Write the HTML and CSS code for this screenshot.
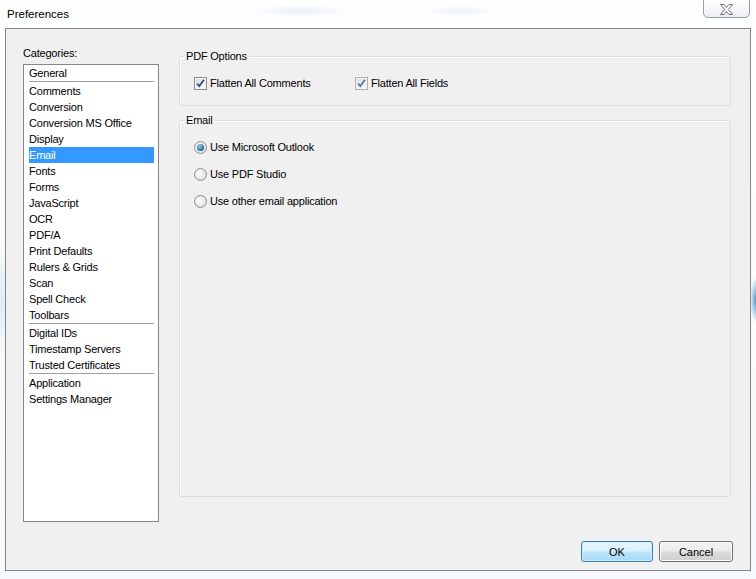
FILE: index.html
```html
<!DOCTYPE html>
<html>
	<head>
		<meta charset="utf-8">
		<title>Preferences</title>
		<link rel="stylesheet" href="styles.css">
	</head>
	<body>
		<div class="titlebar">
			<span class="title">Preferences</span>
			<div class="close-btn">
				<svg width="15" height="11" viewBox="0 0 15 11">
					<path d="M1.5 0.5 H5 L7.5 3.4 L10 0.5 H13.5 L9.3 5.5 L13.5 10.5 H10 L7.5 7.6 L5 10.5 H1.5 L5.7 5.5 Z" fill="#fff" stroke="#6a707a" stroke-width="1" stroke-linejoin="round"/>
				</svg>
			</div>
		</div>
		<div class="dialog">
			<div class="content">
				<div class="categories">
					<div class="cat-label">Categories:</div>
					<ul class="cat-list">
						<li>General</li>
						<li class="sep"></li>
						<li>Comments</li>
						<li>Conversion</li>
						<li>Conversion MS Office</li>
						<li>Display</li>
						<li class="active">Email</li>
						<li>Fonts</li>
						<li>Forms</li>
						<li>JavaScript</li>
						<li>OCR</li>
						<li>PDF/A</li>
						<li>Print Defaults</li>
						<li>Rulers &amp; Grids</li>
						<li>Scan</li>
						<li>Spell Check</li>
						<li>Toolbars</li>
						<li class="sep"></li>
						<li>Digital IDs</li>
						<li>Timestamp Servers</li>
						<li>Trusted Certificates</li>
						<li class="sep"></li>
						<li>Application</li>
						<li>Settings Manager</li>
					</ul>
				</div>
				<div class="options">
					<fieldset class="group group-pdf">
						<legend>PDF Options</legend>
						<div class="check-row">
							<label class="check-option">
								<span class="checkbox"><svg width="11" height="11" viewBox="0 0 11 11"><path d="M2 5.5 L4.3 8 L9 1.8" fill="none" stroke="#2a4d8f" stroke-width="1.8"/></svg></span>
								Flatten All Comments
							</label>
							<label class="check-option">
								<span class="checkbox light"><svg width="11" height="11" viewBox="0 0 11 11"><path d="M2 5.5 L4.3 8 L9 1.8" fill="none" stroke="#5a72a0" stroke-width="1.8"/></svg></span>
								Flatten All Fields
							</label>
						</div>
					</fieldset>
					<fieldset class="group group-email">
						<legend>Email</legend>
						<label class="radio-option"><span class="radio checked"></span>Use Microsoft Outlook</label>
						<label class="radio-option"><span class="radio"></span>Use PDF Studio</label>
						<label class="radio-option"><span class="radio"></span>Use other email application</label>
					</fieldset>
				</div>
			</div>
			<div class="footer">
				<button class="btn btn-default">OK</button>
				<button class="btn">Cancel</button>
			</div>
		</div>
	</body>
</html>
```

FILE: styles.css
```css
*{
	margin: 0;
	padding: 0;
	box-sizing: border-box;
	list-style: none;
}
html,body{
	width: 756px;
	height: 579px;
	overflow: hidden;
}
body{
	font-family: "Liberation Sans", Arial, sans-serif;
	font-size: 11px;
	letter-spacing: -0.2px;
	color: #000;
	background:
		radial-gradient(ellipse 6px 22px at 756px 300px, #4d95c9, rgba(77,149,201,0) 100%),
		radial-gradient(ellipse 50px 6px at 300px 11px, #e8f0f8, rgba(232,240,248,0) 100%),
		radial-gradient(ellipse 40px 5px at 460px 11px, #eaf2f9, rgba(234,242,249,0) 100%),
		radial-gradient(ellipse 8px 60px at 2px 300px, #dceaf4, rgba(220,234,244,0) 100%),
		linear-gradient(#fdfefe, #f6f9fb);
}
.titlebar{
	height: 28px;
	display: flex;
	align-items: flex-start;
}
.title{
	font-size: 11.5px;
	letter-spacing: 0;
	margin: 7px 0 0 7px;
	line-height: 14px;
}
.close-btn{
	margin-left: auto;
	margin-right: 6px;
	width: 47px;
	height: 19px;
	margin-top: -1px;
	border: 1px solid #9a9fa6;
	border-radius: 0 0 5px 5px;
	background: linear-gradient(#ffffff, #f6f7f9 50%, #eceef1);
	display: flex;
	align-items: center;
	justify-content: center;
	padding-top: 1px;
}
.dialog{
	margin: 0 5px;
	height: 543px;
	border: 1px solid #858585;
	background: #f0f0f0;
	display: flex;
	flex-direction: column;
}
.content{
	display: flex;
	padding: 16px 0 0 17px;
}
.categories{
	width: 136px;
}
.cat-label{
	line-height: 16px;
	margin-bottom: 3px;
}
.cat-list{
	height: 458px;
	border: 1px solid #828790;
	background: #fff;
}
.cat-list li{
	height: 16px;
	line-height: 16px;
	margin: 0 4px 0 5px;
	white-space: nowrap;
}
.cat-list li.sep{
	height: 2px;
	border-top: 1px solid #a0a0a0;
}
.cat-list li.active{
	background: #3399ff;
	color: #fff;
}
.options{
	margin-left: 20px;
	width: 552px;
	margin-top: 3px;
}
.group{
	border: 1px solid #d5dfe5;
	border-radius: 3px;
	box-shadow: inset 1px 1px 0 #fff;
	padding: 0 14px;
}
.group legend{
	line-height: 16px;
	padding: 0 2px;
	margin-left: -10px;
}
.group-pdf{
	padding-top: 11px;
	padding-bottom: 14px;
}
.check-row{
	display: flex;
}
.check-option{
	display: flex;
	align-items: center;
	height: 16px;
	width: 161px;
	gap: 3px;
}
.checkbox{
	width: 13px;
	height: 13px;
	border: 1px solid #8e8f8f;
	background: linear-gradient(135deg, #dcdcdc, #fdfdfd);
	box-shadow: inset 0 0 0 1px #f4f4f4;
	display: flex;
	align-items: center;
	justify-content: center;
}
.checkbox.light{
	border-color: #b1b1b1;
}
.group-email{
	margin-top: 6px;
	height: 385px;
	padding-top: 11px;
	display: flex;
	flex-direction: column;
	gap: 11px;
}
.radio-option{
	display: flex;
	align-items: center;
	height: 16px;
	gap: 3px;
}
.radio{
	width: 13px;
	height: 13px;
	border-radius: 50%;
	border: 1px solid #8e8f8f;
	background: radial-gradient(circle at 40% 40%, #ffffff, #dcdcdc 80%);
	display: flex;
	align-items: center;
	justify-content: center;
}
.radio.checked::after{
	content: "";
	width: 7px;
	height: 7px;
	border-radius: 50%;
	background: radial-gradient(circle at 40% 35%, #8fd1f5, #1c5b8f 75%);
}
.footer{
	margin-top: auto;
	display: flex;
	justify-content: flex-end;
	gap: 6px;
	padding: 0 17px 8px 0;
}
.btn{
	font-family: "Liberation Sans", Arial, sans-serif;
	font-size: 11px;
	color: #000;
	width: 74px;
	height: 21px;
	border: 1px solid #707070;
	border-radius: 3px;
	background: linear-gradient(#f2f2f2, #ebebeb 49%, #dddddd 51%, #cfcfcf);
	box-shadow: inset 0 0 0 1px #fcfcfc;
}
.btn-default{
	width: 72px;
	border-color: #3c7fb1;
	background: linear-gradient(#eaf6fd, #d9f0fc 49%, #bee6fd 51%, #a7d9f5);
	box-shadow: inset 0 0 0 1px #cdeaf8;
}
```
